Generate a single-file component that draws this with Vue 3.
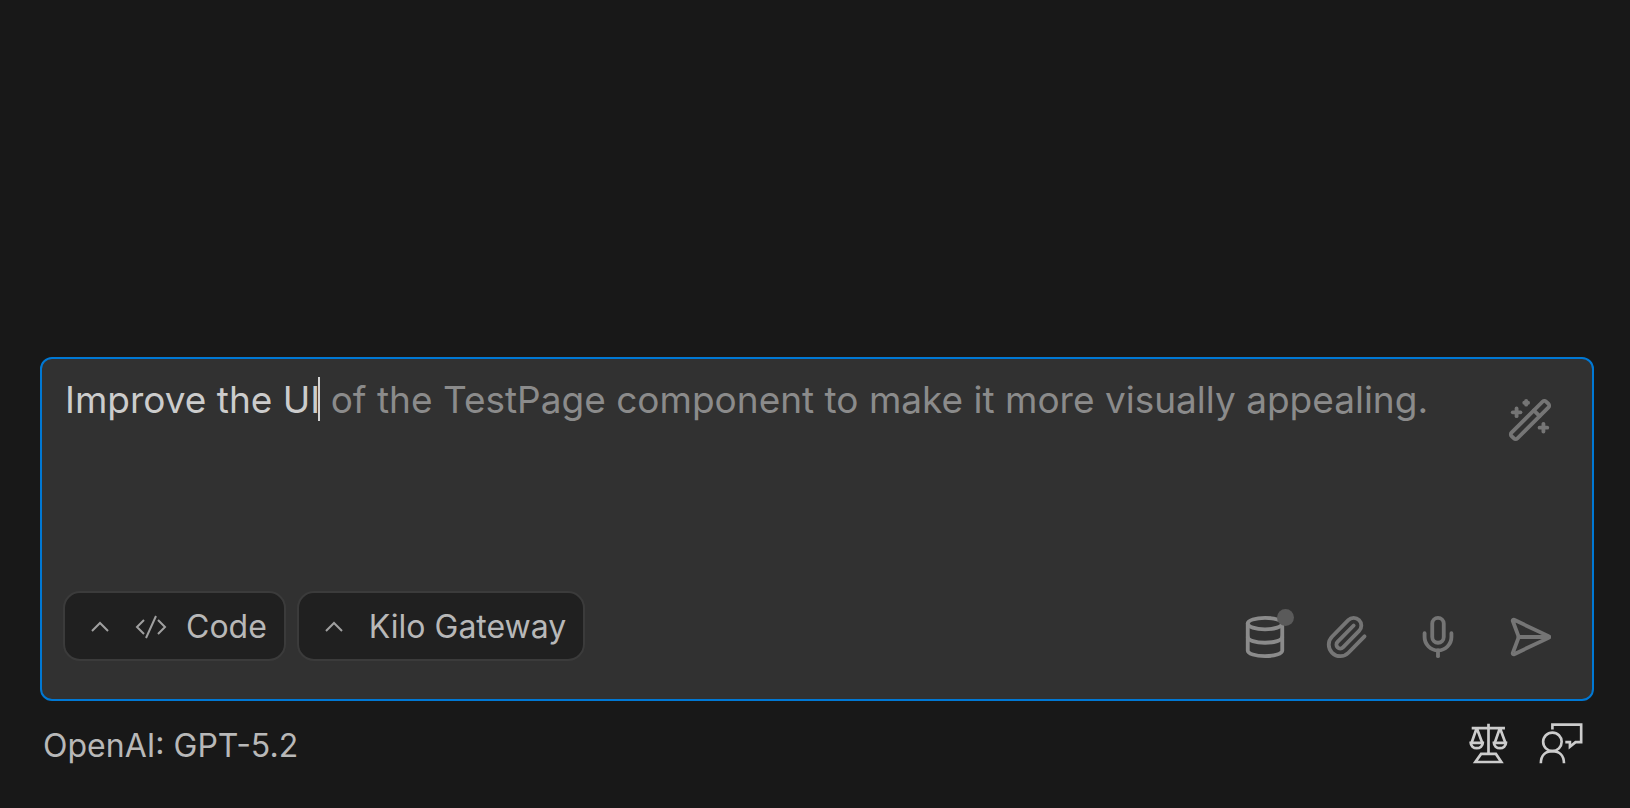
<template>
  <main class="chat">
    <form class="composer" @submit.prevent="sendMessage">
      <div class="prompt">
        <div class="editor">
          <textarea
            v-model="message"
            class="input"
            rows="1"
            aria-label="Message"
            spellcheck="false"
            @keydown.tab.prevent="acceptSuggestion"
          ></textarea>
          <div class="ghost" aria-hidden="true">
            <span class="typed">{{ message }}</span><span class="caret"></span><span>{{ suggestion }}</span>
          </div>
        </div>
        <button type="button" class="icon-btn enhance" aria-label="Enhance prompt">
          <svg class="icon" viewBox="0 0 24 24">
            <path v-for="d in icons.wand" :key="d" :d="d" />
          </svg>
        </button>
      </div>

      <div class="toolbar">
        <div class="selectors">
          <button type="button" class="pill">
            <svg class="chevron" viewBox="0 0 18 11"><path d="M1 10l8-8 8 8" /></svg>
            <svg class="code" viewBox="0 0 32 24">
              <path d="M9 5L2 12l7 7M23 5l7 7-7 7M21 1L11 23" />
            </svg>
            <span>Code</span>
          </button>
          <button type="button" class="pill">
            <svg class="chevron" viewBox="0 0 18 11"><path d="M1 10l8-8 8 8" /></svg>
            <span>Kilo Gateway</span>
          </button>
        </div>

        <div class="actions">
          <button type="button" class="icon-btn index" aria-label="Codebase index">
            <svg class="icon" viewBox="0 0 24 24">
              <ellipse cx="12" cy="5" rx="9" ry="3" />
              <path v-for="d in icons.database" :key="d" :d="d" />
            </svg>
            <span class="status"></span>
          </button>
          <button type="button" class="icon-btn" aria-label="Attach file">
            <svg class="icon" viewBox="0 0 24 24">
              <path v-for="d in icons.paperclip" :key="d" :d="d" />
            </svg>
          </button>
          <button type="button" class="icon-btn" aria-label="Voice input">
            <svg class="icon" viewBox="0 0 24 24">
              <rect x="9" y="2" width="6" height="13" rx="3" />
              <path v-for="d in icons.mic" :key="d" :d="d" />
            </svg>
          </button>
          <button type="submit" class="icon-btn" aria-label="Send">
            <svg class="icon" viewBox="0 0 24 24">
              <path v-for="d in icons.send" :key="d" :d="d" />
            </svg>
          </button>
        </div>
      </div>
    </form>

    <footer class="footer">
      <span>OpenAI: GPT-5.2</span>
      <div class="links">
        <button type="button" class="link-btn" aria-label="Compare models">
          <svg class="scales" viewBox="88 69 116 122">
            <path d="M146 71V161M96 84H195M111 84L96 127M111 84L127 127M180 84L165 127M180 84L196 127" />
            <path d="M93 128H129A18 16 0 0 1 93 128ZM162 128H198A18 16 0 0 1 162 128Z" />
            <path d="M124 161H168L184 185H107Z" />
          </svg>
        </button>
        <button type="button" class="link-btn" aria-label="Send feedback">
          <svg class="feedback" viewBox="296 70 132 124">
            <circle cx="336" cy="127" r="28" />
            <path d="M301 192C301 167 316 155 336 155S371 167 371 192" />
            <path d="M336 90V75H423V128H406L389 142V128H375" />
          </svg>
        </button>
      </div>
    </footer>
  </main>
</template>

<script setup>
import { ref } from 'vue'

const message = ref('Improve the UI')
const suggestion = ref(' of the TestPage component to make it more visually appealing.')

const icons = {
  wand: [
    'm21.64 3.64-1.28-1.28a1.21 1.21 0 0 0-1.72 0L2.36 18.64a1.21 1.21 0 0 0 0 1.72l1.28 1.28a1.2 1.2 0 0 0 1.72 0L21.64 5.36a1.2 1.2 0 0 0 0-1.72',
    'm14 7 3 3',
    'M5 6v4',
    'M19 14v4',
    'M10 2v2',
    'M7 8H3',
    'M21 16h-4',
    'M11 3H9'
  ],
  database: ['M3 5v14a9 3 0 0 0 18 0V5', 'M3 12a9 3 0 0 0 18 0'],
  paperclip: [
    'm16 6-8.414 8.586a2 2 0 0 0 2.829 2.829l8.414-8.586a4 4 0 1 0-5.657-5.657l-8.379 8.551a6 6 0 1 0 8.485 8.485l8.379-8.551'
  ],
  mic: ['M12 19v3', 'M19 10v2a7 7 0 0 1-14 0v-2'],
  send: [
    'M3.714 3.048a.498.498 0 0 0-.683.627l2.843 7.627a2 2 0 0 1 0 1.396l-2.842 7.627a.498.498 0 0 0 .682.627l18-8.5a.5.5 0 0 0 0-.904z',
    'M6 12h16'
  ]
}

// Tab takes over the ghost text
const acceptSuggestion = () => {
  message.value += suggestion.value
  suggestion.value = ''
}

const sendMessage = () => {
  message.value = ''
  suggestion.value = ''
}
</script>

<style>
body {
  background: #181818;
}
</style>

<style scoped>
.chat {
  box-sizing: border-box;
  min-height: 100vh;
  padding: 40px 36px 37px 40px;
  display: flex;
  flex-direction: column;
  justify-content: flex-end;
  font-family: Inter, "Liberation Sans", sans-serif;
  font-size: 32px;
  line-height: 50px;
  color: #b8b8b8;
  background: #181818;
}
button {
  margin: 0;
  padding: 0;
  border: none;
  background: none;
  font: inherit;
  color: inherit;
  cursor: pointer;
}
svg {
  display: block;
  fill: none;
  stroke: currentColor;
}
.composer {
  border: 2px solid #0078d4;
  border-radius: 12px;
  padding: 15px 22px 16px 21px;
  background: #313131;
}
.prompt {
  display: flex;
  align-items: flex-start;
  min-height: 217px;
}
.editor {
  flex: 1;
  display: grid;
  padding-left: 2px;
}
.input,
.ghost {
  grid-area: 1 / 1;
  margin: 0;
  padding: 0;
  border: none;
  font-family: inherit;
  font-size: 37px;
  line-height: 52px;
  white-space: pre-wrap;
}
.input {
  resize: none;
  outline: none;
  overflow: hidden;
  background: transparent;
  color: #cccccc;
  caret-color: transparent;
}
.ghost {
  pointer-events: none;
  color: #8b8b8b;
}
.typed {
  visibility: hidden;
}
.caret {
  display: inline-block;
  width: 2px;
  height: 44px;
  margin: 0 0 -8px -2px;
  vertical-align: baseline;
  background: #d4d4d4;
}
.icon-btn {
  position: relative;
  display: flex;
  align-items: center;
  justify-content: center;
  width: 80px;
  height: 92px;
  color: #757575;
}
.icon {
  width: 46px;
  height: 46px;
  stroke-width: 2;
  stroke-linecap: round;
  stroke-linejoin: round;
}
.toolbar {
  display: flex;
  justify-content: space-between;
  align-items: flex-start;
}
.selectors,
.actions {
  display: flex;
  gap: 12px;
}
.selectors {
  gap: 11px;
}
.pill {
  box-sizing: border-box;
  display: flex;
  align-items: center;
  height: 70px;
  padding: 1px 17px 0 26px;
  border: 2px solid #3b3b3b;
  border-radius: 17px;
  background: #202020;
}
.chevron {
  width: 18px;
  height: 11px;
  margin-right: 26px;
  stroke-width: 2;
  color: #a0a0a0;
}
.code {
  width: 32px;
  height: 24px;
  margin-right: 19px;
  stroke-width: 2;
  color: #a0a0a0;
}
.index {
  width: 58px;
  color: #8b8b8b;
}
.status {
  position: absolute;
  top: 18px;
  right: 0;
  width: 17px;
  height: 17px;
  border-radius: 50%;
  background: #5a5a5a;
}
.footer {
  display: flex;
  justify-content: space-between;
  align-items: flex-start;
  margin-top: 20px;
  padding: 0 11px 0 3px;
}
.links {
  display: flex;
  gap: 31px;
  padding-top: 2px;
  color: #cccccc;
}
.scales {
  width: 39px;
  height: 41px;
  stroke-width: 8;
}
.feedback {
  width: 44px;
  height: 41px;
  stroke-width: 8;
}
</style>
